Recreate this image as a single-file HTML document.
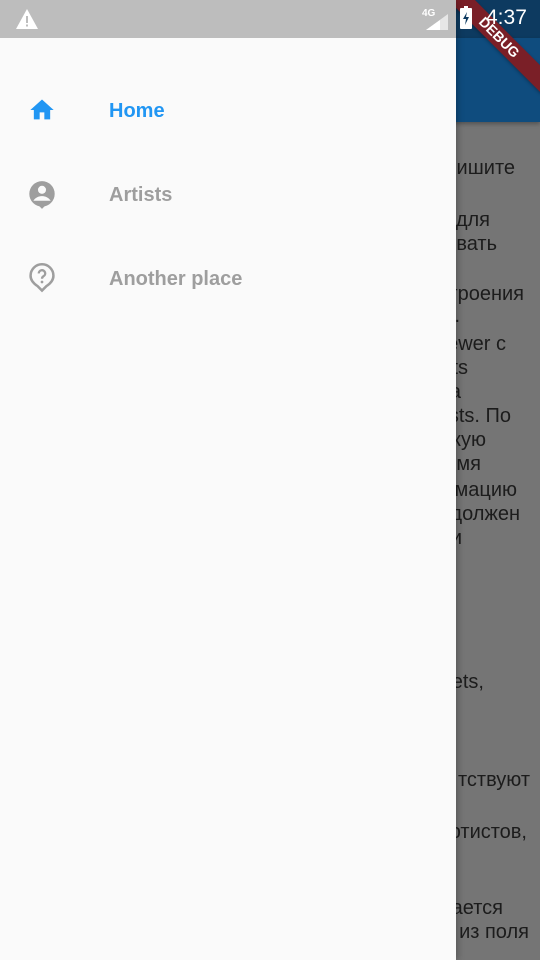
<!DOCTYPE html>
<html><head><meta charset="utf-8"><style>
*{margin:0;padding:0;box-sizing:border-box}
body{width:540px;height:960px;overflow:hidden;position:relative;background:#757575;font-family:"Liberation Sans",sans-serif}
.sb{position:absolute;top:0;left:0;width:540px;height:38px;background:#0d3a60}
.ab{position:absolute;top:38px;left:0;width:540px;height:84px;background:#0f4c7e;box-shadow:0 2px 4px rgba(0,0,0,.3)}
.t{position:absolute;font-size:20px;color:#1c1c1c;white-space:nowrap;line-height:24px;text-align:right}
.dr{position:absolute;top:0;left:0;width:456px;height:960px;background:#fafafa;box-shadow:2px 0 6px rgba(0,0,0,.25);z-index:3}
.dsb{position:absolute;top:0;left:0;width:456px;height:38px;background:#bdbdbd}
.it{position:absolute;left:109px;font-size:20px;font-weight:bold;color:#9e9e9e}
.ic{position:absolute;left:28px}
.dbg{position:absolute;top:0;left:440px;width:100px;height:100px;overflow:hidden}
.dbg div{position:absolute;top:28px;left:-11px;width:140px;height:19px;background:#7a1f27;color:#fff;font-weight:bold;font-size:14px;text-align:center;line-height:19px;transform:rotate(45deg);box-shadow:0 1px 3px rgba(0,0,0,.3)}
</style></head><body>
<div class="sb"></div>
<div class="ab"></div>
<div class="t" style="top:156px;right:25px">пишите</div>
<div class="t" style="top:208px;right:50px">для</div>
<div class="t" style="top:232px;right:43px">вать</div>
<div class="t" style="top:282px;right:16px">троения</div>
<div class="t" style="top:304px;right:80px">x.</div>
<div class="t" style="top:332px;right:34px">Viewer с</div>
<div class="t" style="top:356px;right:72px">ts</div>
<div class="t" style="top:380px;right:79px">на</div>
<div class="t" style="top:404px;right:29px">ists. По</div>
<div class="t" style="top:428px;right:54px">кую</div>
<div class="t" style="top:452px;right:59px">имя</div>
<div class="t" style="top:478px;right:23px">рмацию</div>
<div class="t" style="top:502px;right:20px">должен</div>
<div class="t" style="top:526px;right:78px">ли</div>
<div class="t" style="top:670px;right:56px">sets,</div>
<div class="t" style="top:768px;right:10px">тствуют</div>
<div class="t" style="top:820px;right:13px">ртистов,</div>
<div class="t" style="top:896px;right:37px">вается</div>
<div class="t" style="top:920px;right:11px">из поля</div>
<div class="dbg"><div>DEBUG</div></div>
<svg style="position:absolute;top:6px;left:460px;z-index:5" width="12" height="23" viewBox="0 0 12 23"><rect x="0" y="2" width="12" height="21" rx="1" fill="#fff"/><rect x="4" y="0" width="4" height="3" fill="#fff"/><path d="M7 6L3 13h3l-1 6 4-8H6z" fill="#0d3a60"/></svg>
<div style="position:absolute;top:6px;left:486px;color:#fff;font-size:21px;z-index:5">4:37</div>
<div class="dr">
<div class="dsb"></div>
<svg style="position:absolute;top:8px;left:14px" width="26" height="22" viewBox="0 0 24 22"><path d="M12 1L23 21H1Z" fill="#fff"/><rect x="11" y="8" width="2" height="7" fill="#bdbdbd"/><rect x="11" y="16.5" width="2" height="2" fill="#bdbdbd"/></svg>
<div style="position:absolute;top:8px;left:422px;color:#fff;font-size:10px;font-weight:bold">4G</div>
<svg style="position:absolute;top:14px;left:426px" width="22" height="16"><path d="M0 16L22 0V16Z" fill="#e6e6e6"/><path d="M0 16L14 6V16Z" fill="#fff"/></svg>
<svg class="ic" style="top:96px" width="28" height="28" viewBox="0 0 24 24"><path d="M10 20v-6h4v6h5v-8h3L12 3 2 12h3v8z" fill="#2196f3"/></svg>
<div class="it" style="top:100px;color:#2196f3">Home</div>
<svg class="ic" style="top:180px" width="28" height="30" viewBox="0 0 24 26"><circle cx="12" cy="12" r="11" fill="#9e9e9e"/><circle cx="12" cy="8.5" r="3.5" fill="#fafafa"/><path d="M4.5 18c2-3 5-4 7.5-4s5.5 1 7.5 4" fill="#fafafa"/><path d="M9 22l3 3 3-3z" fill="#9e9e9e"/></svg>
<div class="it" style="top:184px">Artists</div>
<svg class="ic" style="top:262px" width="28" height="32" viewBox="0 0 24 28"><path d="M12 2a10 10 0 0 0-10 10c0 4 3 7 6 9l4 4 4-4c3-2 6-5 6-9A10 10 0 0 0 12 2z" fill="none" stroke="#9e9e9e" stroke-width="2.2"/><path d="M9.2 10a2.8 2.8 0 1 1 4.2 2.4c-1 .6-1.4 1.1-1.4 2.3" fill="none" stroke="#9e9e9e" stroke-width="2"/><circle cx="12" cy="17.5" r="1.2" fill="#9e9e9e"/></svg>
<div class="it" style="top:268px">Another place</div>
</div>
</body></html>
